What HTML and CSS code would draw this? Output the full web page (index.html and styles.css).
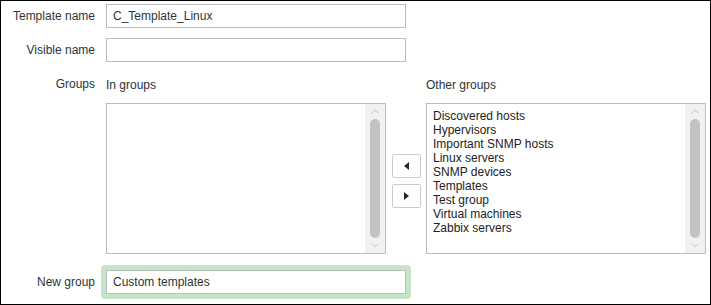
FILE: index.html
```html
<!DOCTYPE html>
<html>
<head>
<meta charset="utf-8">
<link rel="stylesheet" href="styles.css">
</head>
<body>
<div class="frame">
  <div class="row">
    <div class="label">Template name</div>
    <input class="input" type="text" value="C_Template_Linux">
  </div>
  <div class="row">
    <div class="label">Visible name</div>
    <input class="input" type="text" value="">
  </div>
  <div class="row row-top">
    <div class="label label-line">Groups</div>
    <div class="groups">
      <div class="head">In groups</div>
      <div></div>
      <div class="head">Other groups</div>
      <div class="listbox">
        <div class="options"></div>
        <div class="scrollbar">
          <div class="sb-arrow"><svg width="8" height="5" viewBox="0 0 8 5"><polyline points="0.5,4.5 4,1 7.5,4.5" fill="none" stroke="#c6c6c6" stroke-width="1"/></svg></div>
          <div class="thumb"></div>
          <div class="sb-arrow"><svg width="8" height="5" viewBox="0 0 8 5"><polyline points="0.5,0.5 4,4 7.5,0.5" fill="none" stroke="#c6c6c6" stroke-width="1"/></svg></div>
        </div>
      </div>
      <div class="buttons">
        <div class="btn"><svg width="5" height="8" viewBox="0 0 5 8"><polygon points="5,0 5,8 0,4" fill="#1f2c33"/></svg></div>
        <div class="btn"><svg width="5" height="8" viewBox="0 0 5 8"><polygon points="0,0 0,8 5,4" fill="#1f2c33"/></svg></div>
      </div>
      <div class="listbox">
        <div class="options">
          <div>Discovered hosts</div>
          <div>Hypervisors</div>
          <div>Important SNMP hosts</div>
          <div>Linux servers</div>
          <div>SNMP devices</div>
          <div>Templates</div>
          <div>Test group</div>
          <div>Virtual machines</div>
          <div>Zabbix servers</div>
        </div>
        <div class="scrollbar">
          <div class="sb-arrow"><svg width="8" height="5" viewBox="0 0 8 5"><polyline points="0.5,4.5 4,1 7.5,4.5" fill="none" stroke="#c6c6c6" stroke-width="1"/></svg></div>
          <div class="thumb"></div>
          <div class="sb-arrow"><svg width="8" height="5" viewBox="0 0 8 5"><polyline points="0.5,0.5 4,4 7.5,0.5" fill="none" stroke="#c6c6c6" stroke-width="1"/></svg></div>
        </div>
      </div>
    </div>
  </div>
  <div class="row row-new">
    <div class="label">New group</div>
    <div class="highlight">
      <input class="input" type="text" value="Custom templates">
    </div>
  </div>
</div>
</body>
</html>
```

FILE: styles.css
```css
html, body {
  margin: 0;
  padding: 0;
  background: #fff;
}
.frame {
  width: 711px;
  height: 305px;
  box-sizing: border-box;
  border: 1px solid #000;
  padding-top: 3px;
  display: flex;
  flex-direction: column;
  gap: 10px;
  font-family: "Liberation Sans", Arial, sans-serif;
  font-size: 12px;
  color: #2b3438;
}
.row {
  display: flex;
  align-items: center;
}
.row-top {
  align-items: flex-start;
}
.row-new {
  margin-top: 1px;
}
.label {
  width: 94px;
  flex-shrink: 0;
  margin-right: 11px;
  text-align: right;
  white-space: nowrap;
}
.label-line {
  line-height: 25px;
}
.input {
  width: 300px;
  height: 24px;
  box-sizing: border-box;
  margin: 0;
  border: 1px solid #b9bec1;
  border-radius: 0;
  padding: 0 6px;
  background: #fff;
  font-family: "Liberation Sans", Arial, sans-serif;
  font-size: 12px;
  color: #2b3438;
  outline: none;
}
.groups {
  display: grid;
  grid-template-columns: 280px 40px 280px;
  grid-template-rows: 31px 151px;
}
.head {
  line-height: 26px;
}
.listbox {
  height: 151px;
  box-sizing: border-box;
  border: 1px solid #b9bec1;
  display: flex;
}
.options {
  flex: 1;
  padding: 5px 5px 4px 6px;
  line-height: 14px;
  color: #222;
  white-space: nowrap;
}
.scrollbar {
  width: 20px;
  background: #f1f1f1;
  display: flex;
  flex-direction: column;
  align-items: center;
}
.sb-arrow {
  height: 15px;
  display: flex;
  align-items: center;
  justify-content: center;
}
.thumb {
  flex: 1;
  width: 10px;
  border-radius: 5px;
  background: #c1c3c5;
}
.buttons {
  align-self: center;
  margin: 4px 0 0 6px;
  display: flex;
  flex-direction: column;
  gap: 6px;
}
.btn {
  width: 29px;
  height: 24px;
  box-sizing: border-box;
  border: 1px solid #c9ccce;
  border-radius: 2px;
  background: #fff;
  display: flex;
  align-items: center;
  justify-content: center;
}
.highlight {
  margin-left: -5px;
  padding: 5px;
  background: #c7e4c8;
  border-radius: 4px;
}
```
